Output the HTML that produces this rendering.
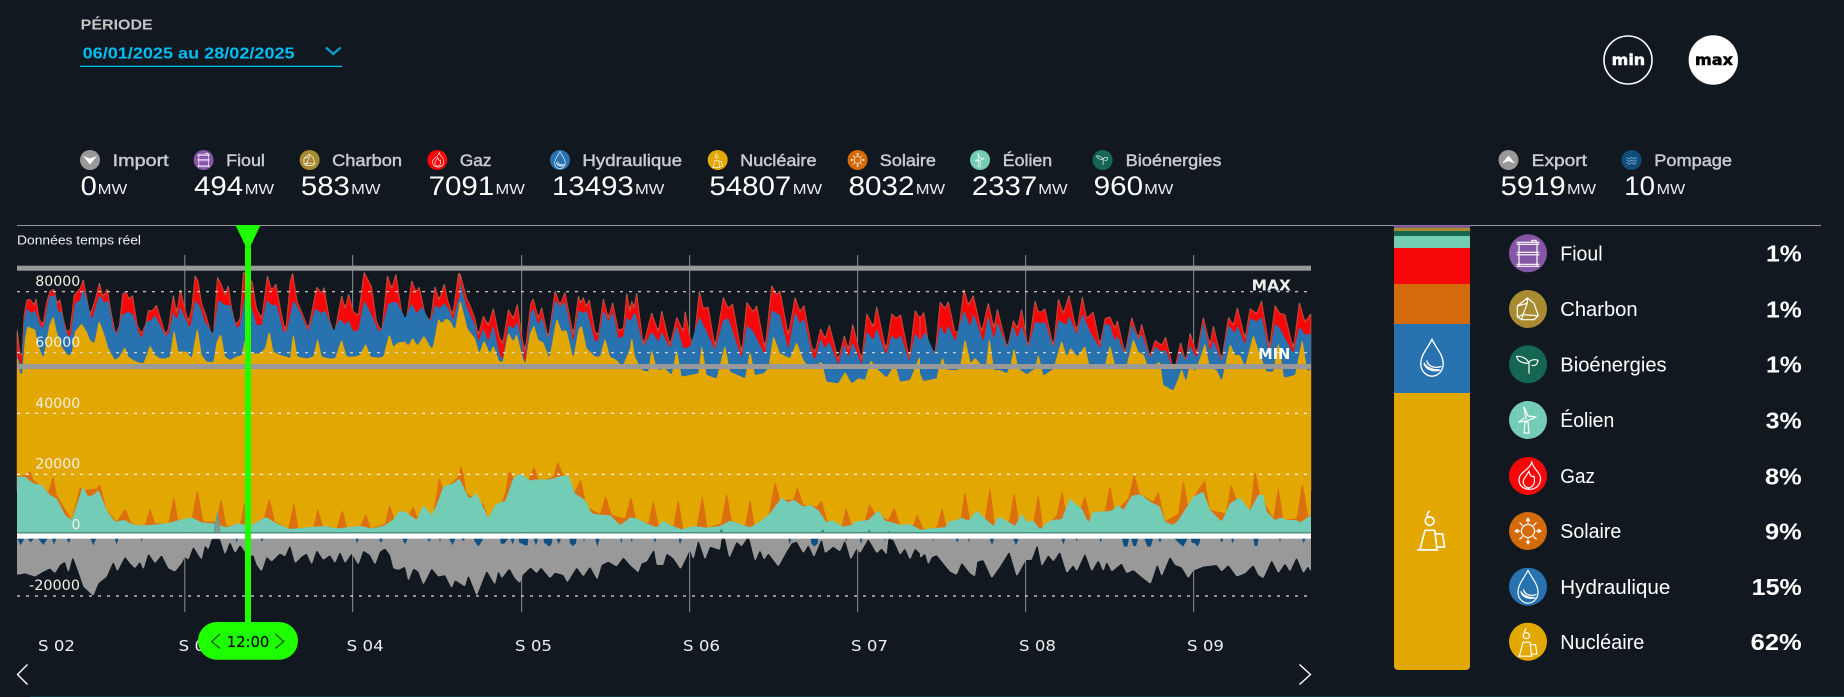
<!DOCTYPE html>
<html lang="fr"><head><meta charset="utf-8"><title>Période</title>
<style>
html,body{margin:0;padding:0;background:#111820;width:1844px;height:697px;overflow:hidden}
svg{display:block}
text{font-family:"Liberation Sans",sans-serif}
.d{font-family:"DejaVu Sans",sans-serif}
.lb{font-size:17px;font-weight:400;fill:#c8ccd0;stroke:#c8ccd0;stroke-width:.45}
.v{font-size:27px;fill:#fff}
.u{font-size:15px;fill:#e8eaec}
.n{font-size:20px;fill:#fff}
.p{font-size:23px;font-weight:700;fill:#fff}
.ax{font-size:14px;fill:#f3f0e6}
.wk{font-size:15px;fill:#eee}
.i{fill:none;stroke:#fff;stroke-width:1.2;stroke-linejoin:round;stroke-linecap:round}
</style></head><body>
<svg width="1844" height="697" viewBox="0 0 1844 697" xmlns="http://www.w3.org/2000/svg">
<defs>
<filter id="sm" filterUnits="userSpaceOnUse" x="0" y="200" width="1844" height="497" color-interpolation-filters="sRGB">
<feGaussianBlur stdDeviation=".7"/>
<feComponentTransfer><feFuncA type="linear" slope="5" intercept="-2"/></feComponentTransfer>
</filter>
<g id="fioul" class="i"><path d="M8 8H30M8 10H30M10 8V31M28 8V31M8 18H30M8 20.500H30M8 30H30M8 32H30M23 8V6H27V8"/></g>
<g id="charbon" class="i"><path d="M18.300 8L25 13.300L29.300 25.700L25 29.700H12.700L8.300 26.700V16L18.300 8ZM8.300 16L18.300 13.300L14 24.700L8.300 26.700M18.300 8V13.300M14 24.700L12.700 29.700M14 24.700L29.300 25.700"/></g>
<g id="bio" class="i"><path d="M20 28V16M20 18C18 13 13 11 7.500 11C8.500 16 13 18 20 18M20 17C22 14 26 14 29 15C28.500 19 26 21 23 20"/></g>
<g id="eolien" class="i"><path d="M15 32L16 21H19L20 32ZM17 18L15 6L19 15L27 16L18 20L10 21L15 17"/></g>
<g id="gaz" class="i"><path d="M22.700 4.700C24 13 34 16 31 25C29.500 30 25 32.500 20 32.300C14 32 9.500 28 10 22C10.500 15 22 12 22.700 4.700ZM20 31C15 30 13 26 15 22C17 19 19 16 20 14C20.500 18 23 21 25 19C26 24 26 29 20 31Z"/></g>
<g id="solaire" class="i"><circle cx="19" cy="19" r="6.500"/><path d="M19 11V7.500M19 27V30.500M11 19H7.500M27 19H30.500M13.300 13.300L10.800 10.800M24.700 13.300L27.200 10.800M13.300 24.700L10.800 27.200M24.700 24.700L27.200 27.200M17.500 8.500L19 6L20.500 8.500M17.500 29.500L19 32L20.500 29.500M8.500 17.500L6 19L8.500 20.500M29.500 17.500L32 19L29.500 20.500"/></g>
<g id="hydro" class="i"><path d="M19 2.500C22 9.500 29 16 29 24.500C29 31 24 35.500 19 35.500C14 35.500 9 31 9 24.500C9 16 16 9.500 19 2.500Z"/><path d="M12 24C13 29 19 32 26 30C21 30 15 29 12 24ZM14.500 22C15.500 26 20 29 27 27"/></g>
<g id="nuc" class="i"><path d="M14 19.500H21M14 19.500L10.500 33M21 19.500L22.500 33M21.500 22H26.500L28 31.500H23M9 33.500H23M17 16C13.500 15 13.500 11 16 10C15 8.500 16 7 17 6M17 16C20 16 21 13 20 11.500C19.500 10 18 10 16 10"/></g>
<g id="pomp" class="i"><path d="M10 14L14 17L19 14L24 17L28 14M10 19L14 22L19 19L24 22L28 19M10 24L14 27L19 24L24 27L28 24" stroke-width="1.800" stroke="#6fa0c4"/></g>
</defs>

<rect width="1844" height="697" fill="#111820"/>
<rect x="30" y="696" width="1814" height="1" fill="#0f3a44"/>

<!-- period -->
<text x="80.700" y="29.500" font-size="15" font-weight="700" fill="#c4c4c4" textLength="72" lengthAdjust="spacingAndGlyphs">PÉRIODE</text>
<text x="82.600" y="58.300" font-size="16" font-weight="700" fill="#00bef2" textLength="212" lengthAdjust="spacingAndGlyphs">06/01/2025 au 28/02/2025</text>
<rect x="80" y="65.700" width="262" height="1.300" fill="#00bef2"/>
<path d="M326 47.500L333.300 54L340.600 47.500" fill="none" stroke="#0b9ccb" stroke-width="2.400"/>

<!-- min/max -->
<circle cx="1628" cy="60" r="24" fill="none" stroke="#fff" stroke-width="1.600"/>
<text class="d" x="1611.700" y="65" font-size="15" font-weight="700" fill="#fff" stroke="#fff" stroke-width=".5" textLength="33.500" lengthAdjust="spacingAndGlyphs">min</text>
<circle cx="1713.300" cy="60" r="24.700" fill="#fff"/>
<text class="d" x="1695" y="65" font-size="15" font-weight="700" fill="#000" stroke="#000" stroke-width=".5" textLength="38" lengthAdjust="spacingAndGlyphs">max</text>

<!-- legend top: icons -->
<circle cx="90" cy="160" r="10" fill="#999"/><path d="M83 156L90 158.500L97 156L90 164.500Z" fill="#fff"/>
<circle cx="203.600" cy="160" r="10" fill="#8556a5"/><g transform="translate(193.600,150) scale(.526)"><use href="#fioul"/></g>
<circle cx="309.600" cy="160" r="10" fill="#a88a30"/><g transform="translate(299.600,150) scale(.526)"><use href="#charbon"/></g>
<circle cx="437.300" cy="160" r="10" fill="#f70707"/><g transform="translate(427.300,150) scale(.526)"><use href="#gaz"/></g>
<circle cx="560" cy="160" r="10" fill="#2872b0"/><g transform="translate(550,150) scale(.526)"><use href="#hydro"/></g>
<circle cx="717.700" cy="160" r="10" fill="#e2a700"/><g transform="translate(707.700,150) scale(.526)"><use href="#nuc"/></g>
<circle cx="857.600" cy="160" r="10" fill="#d46b0b"/><g transform="translate(847.600,150) scale(.526)"><use href="#solaire"/></g>
<circle cx="980" cy="160" r="10" fill="#74ccb5"/><g transform="translate(970,150) scale(.526)"><use href="#eolien"/></g>
<circle cx="1102.600" cy="160" r="10" fill="#166751"/><g transform="translate(1092.600,150) scale(.526)"><use href="#bio"/></g>
<circle cx="1508.500" cy="160" r="10" fill="#999"/><path d="M1502 163.500L1508.500 155.500L1515 163.500L1508.500 161Z" fill="#fff"/>
<circle cx="1631.500" cy="160" r="10" fill="#0f4c7a"/><g transform="translate(1621.500,150) scale(.526)"><use href="#pomp"/></g>

<!-- legend top: labels -->
<text class="lb" x="112.700" y="166" textLength="56" lengthAdjust="spacingAndGlyphs">Import</text>
<text class="lb" x="226.200" y="166" textLength="38.700" lengthAdjust="spacingAndGlyphs">Fioul</text>
<text class="lb" x="332.100" y="166" textLength="70" lengthAdjust="spacingAndGlyphs">Charbon</text>
<text class="lb" x="459.900" y="166" textLength="31.600" lengthAdjust="spacingAndGlyphs">Gaz</text>
<text class="lb" x="582.400" y="166" textLength="99.700" lengthAdjust="spacingAndGlyphs">Hydraulique</text>
<text class="lb" x="740.200" y="166" textLength="76.300" lengthAdjust="spacingAndGlyphs">Nucléaire</text>
<text class="lb" x="879.800" y="166" textLength="56.100" lengthAdjust="spacingAndGlyphs">Solaire</text>
<text class="lb" x="1002.800" y="166" textLength="49.400" lengthAdjust="spacingAndGlyphs">Éolien</text>
<text class="lb" x="1125.700" y="166" textLength="95.700" lengthAdjust="spacingAndGlyphs">Bioénergies</text>
<text class="lb" x="1531.700" y="166" textLength="55.300" lengthAdjust="spacingAndGlyphs">Export</text>
<text class="lb" x="1654.300" y="166" textLength="77.700" lengthAdjust="spacingAndGlyphs">Pompage</text>

<!-- values -->
<text class="v" x="80.700" y="195" textLength="16.200" lengthAdjust="spacingAndGlyphs">0</text><text class="u" x="97.700" y="194" textLength="29.600" lengthAdjust="spacingAndGlyphs">MW</text>
<text class="v" x="194.100" y="195" textLength="49" lengthAdjust="spacingAndGlyphs">494</text><text class="u" x="244.800" y="194" textLength="29.300" lengthAdjust="spacingAndGlyphs">MW</text>
<text class="v" x="300.900" y="195" textLength="49" lengthAdjust="spacingAndGlyphs">583</text><text class="u" x="351.100" y="194" textLength="29.300" lengthAdjust="spacingAndGlyphs">MW</text>
<text class="v" x="428.600" y="195" textLength="65.700" lengthAdjust="spacingAndGlyphs">7091</text><text class="u" x="495.500" y="194" textLength="29.300" lengthAdjust="spacingAndGlyphs">MW</text>
<text class="v" x="552" y="195" textLength="81.800" lengthAdjust="spacingAndGlyphs">13493</text><text class="u" x="635" y="194" textLength="29.300" lengthAdjust="spacingAndGlyphs">MW</text>
<text class="v" x="709.400" y="195" textLength="81.800" lengthAdjust="spacingAndGlyphs">54807</text><text class="u" x="792.800" y="194" textLength="29.300" lengthAdjust="spacingAndGlyphs">MW</text>
<text class="v" x="848.500" y="195" textLength="66" lengthAdjust="spacingAndGlyphs">8032</text><text class="u" x="915.800" y="194" textLength="29.300" lengthAdjust="spacingAndGlyphs">MW</text>
<text class="v" x="971.900" y="195" textLength="65.300" lengthAdjust="spacingAndGlyphs">2337</text><text class="u" x="1038.300" y="194" textLength="29.300" lengthAdjust="spacingAndGlyphs">MW</text>
<text class="v" x="1093.700" y="195" textLength="49.400" lengthAdjust="spacingAndGlyphs">960</text><text class="u" x="1144.300" y="194" textLength="29" lengthAdjust="spacingAndGlyphs">MW</text>
<text class="v" x="1500.700" y="195" textLength="65" lengthAdjust="spacingAndGlyphs">5919</text><text class="u" x="1567" y="194" textLength="29" lengthAdjust="spacingAndGlyphs">MW</text>
<text class="v" x="1624.300" y="195" textLength="30.700" lengthAdjust="spacingAndGlyphs">10</text><text class="u" x="1656.700" y="194" textLength="28.500" lengthAdjust="spacingAndGlyphs">MW</text>

<!-- hr -->
<rect x="17" y="225" width="1804" height="1" fill="#9a9a9a"/>
<text x="17" y="244.500" font-size="13" fill="#f0f0f0" textLength="124" lengthAdjust="spacingAndGlyphs">Données temps réel</text>

<!-- week lines -->
<g fill="#7a7d80">
<rect x="184.200" y="255" width="1.200" height="357"/><rect x="352" y="255" width="1.200" height="357"/><rect x="521" y="255" width="1.200" height="357"/><rect x="689" y="255" width="1.200" height="357"/><rect x="857" y="255" width="1.200" height="357"/><rect x="1025" y="255" width="1.200" height="357"/><rect x="1193" y="255" width="1.200" height="357"/>
</g>

<!-- red -->
<g filter="url(#sm)" fill="#f70707" stroke="#94806a" stroke-width="2">
<g transform="translate(0,225) scale(.333333)"><polygon points="51,305 60,385 66,390 72,270 80,225 90,222 103,240 108,218 118,280 128,300 140,230 150,198 162,192 172,235 180,222 190,280 200,320 210,315 222,210 240,190 250,162 258,205 270,270 285,225 298,172 310,215 322,190 335,270 348,330 358,300 368,205 378,200 388,222 398,210 412,300 424,325 436,300 445,255 455,258 470,240 485,290 497,330 505,310 520,208 530,265 541,190 552,240 565,290 575,250 585,150 595,170 605,235 618,270 632,320 640,330 652,155 665,180 675,210 685,180 695,250 707,300 720,280 730,140 745,160 757,170 770,250 785,280 802,150 815,195 828,175 845,270 857,320 870,170 878,142 892,230 905,260 925,310 950,185 965,205 972,185 990,290 1003,325 1025,210 1035,250 1046,205 1060,260 1075,270 1092,140 1115,185 1130,290 1145,320 1162,150 1175,190 1188,145 1205,260 1218,290 1235,165 1248,200 1258,185 1280,290 1292,280 1305,182 1317,225 1333,175 1343,225 1358,270 1375,145 1380,145 1380,800 51,800"/></g>
<g transform="translate(460,225) scale(.333333)"><polygon points="0,145 10,180 20,220 30,240 45,280 55,330 70,272 85,300 100,248 118,335 128,355 145,252 160,280 172,235 185,330 195,380 212,235 220,220 235,280 245,245 265,340 285,195 300,240 315,200 340,330 355,210 362,235 370,215 378,245 388,222 405,320 415,330 430,218 445,280 458,230 475,315 490,310 500,200 510,260 515,225 522,250 530,200 550,360 575,262 595,320 605,255 630,360 650,275 670,320 675,255 690,335 700,365 718,195 730,250 745,245 765,365 790,215 805,250 818,235 845,385 860,230 880,260 890,240 915,370 935,180 950,210 960,195 985,330 1005,215 1020,260 1032,240 1055,365 1065,380 1082,310 1095,340 1108,298 1135,405 1153,330 1165,375 1178,295 1205,405 1220,265 1240,305 1250,242 1278,375 1295,265 1308,280 1322,268 1348,400 1365,255 1380,280 1380,800 0,800"/></g>
<g transform="translate(920,225) scale(.333333)"><polygon points="0,280 12,260 25,350 45,388 60,230 75,250 85,228 105,320 115,320 132,190 145,240 160,210 185,320 205,232 222,310 232,250 262,370 280,285 292,310 305,250 325,370 345,225 355,260 365,260 375,250 400,365 415,220 430,265 447,210 470,320 487,212 500,280 520,260 540,360 555,280 570,275 585,310 592,285 615,385 635,275 655,340 665,295 690,395 705,345 725,360 737,335 762,440 782,350 797,410 810,322 830,385 850,275 870,360 880,300 905,405 925,275 940,300 952,245 975,340 990,250 1010,265 1025,225 1048,370 1065,240 1080,265 1095,268 1120,370 1138,230 1155,290 1173,265 1173,800 0,800"/></g>
</g>
<!-- blue -->
<g filter="url(#sm)" fill="#2872b0">
<g transform="translate(0,225) scale(.333333)"><polygon points="51,385 60,415 66,415 72,290 80,250 95,265 105,255 120,300 130,310 148,215 165,210 175,260 185,260 195,310 205,335 212,330 225,235 240,225 250,190 262,230 275,285 298,210 315,235 325,225 340,310 352,330 365,270 385,260 400,270 415,320 425,340 440,290 455,285 465,270 480,300 495,330 505,330 520,260 530,285 541,245 555,280 570,310 585,225 600,245 615,290 640,330 655,225 675,240 690,240 710,310 720,300 735,210 750,230 770,300 785,300 800,225 815,240 830,240 850,320 860,320 880,225 900,260 925,320 945,250 965,265 975,255 1000,320 1020,280 1035,300 1045,285 1060,320 1075,315 1092,225 1115,270 1135,318 1145,315 1165,235 1190,230 1215,280 1235,235 1250,265 1265,245 1285,280 1292,290 1305,240 1318,250 1333,235 1345,250 1360,285 1375,220 1380,220 1380,800 51,800"/></g>
<g transform="translate(460,225) scale(.333333)"><polygon points="0,165 10,210 20,245 45,300 55,350 70,310 85,350 100,300 118,385 128,405 145,300 160,310 172,290 185,350 195,420 212,265 220,250 235,300 245,275 265,345 285,225 300,245 315,230 340,350 355,255 370,265 380,255 405,350 415,345 430,255 445,290 458,260 475,340 490,335 500,275 510,290 525,260 550,365 575,320 595,350 605,320 630,370 650,300 670,370 690,365 718,275 740,320 765,375 790,285 805,280 845,400 860,300 880,320 915,390 935,255 960,270 985,375 1005,260 1020,295 1032,280 1055,385 1065,405 1082,340 1095,370 1108,350 1135,420 1153,355 1165,400 1178,350 1205,420 1220,320 1240,345 1250,310 1278,390 1295,330 1308,345 1322,330 1348,410 1365,325 1380,345 1380,800 0,800"/></g>
<g transform="translate(920,225) scale(.333333)"><polygon points="0,350 15,320 45,390 60,300 75,330 85,300 105,350 132,255 150,305 160,265 190,350 205,270 222,345 232,290 262,370 280,300 292,340 305,300 325,370 345,290 365,295 375,290 400,370 415,285 440,300 447,270 470,330 487,265 510,320 540,370 555,295 570,300 585,350 592,330 615,390 635,295 655,345 665,325 690,400 705,365 725,380 737,375 762,440 782,375 797,410 810,360 830,400 850,290 870,380 880,345 905,410 925,300 945,325 952,300 975,360 990,280 1010,290 1025,275 1048,385 1065,295 1080,310 1095,340 1120,385 1138,305 1155,330 1173,325 1173,800 0,800"/></g>
</g>
<!-- gold -->
<g filter="url(#sm)" fill="#e2a700">
<g transform="translate(0,225) scale(.333333)"><polygon points="51,378 60,445 66,448 75,340 82,303 95,310 105,312 115,360 130,400 148,300 160,272 170,320 185,365 205,392 215,385 225,320 245,295 260,320 270,345 283,355 297,285 310,320 325,370 345,405 358,395 375,365 385,395 400,405 415,412 430,415 440,390 450,360 465,390 480,400 497,400 510,395 522,310 535,380 560,380 575,400 592,305 605,390 620,410 640,412 650,350 663,325 675,395 690,405 710,395 725,390 738,330 755,385 780,385 795,370 808,315 820,380 840,390 860,395 870,400 880,320 892,395 920,400 940,395 953,337 965,395 985,400 1005,400 1025,342 1040,395 1065,395 1080,390 1097,355 1112,395 1135,398 1150,395 1168,325 1180,365 1195,352 1215,350 1225,362 1238,338 1252,362 1272,332 1295,372 1300,360 1315,280 1325,295 1338,280 1352,290 1365,315 1380,225 1380,924 51,924"/></g>
<g transform="translate(460,225) scale(.333333)"><polygon points="0,222 10,260 22,310 45,340 58,385 72,345 90,385 100,360 118,410 128,410 145,322 160,350 170,325 185,385 195,420 210,325 222,300 235,345 250,352 268,400 290,278 305,318 320,316 340,400 355,315 365,300 380,370 405,395 420,395 435,338 450,395 470,405 480,418 490,418 510,370 515,330 525,395 545,435 565,440 575,370 590,430 600,435 615,430 635,450 650,370 665,455 715,445 725,355 740,450 770,460 795,358 810,440 855,460 870,375 885,450 910,445 925,430 940,330 960,385 990,400 1010,350 1030,405 1050,432 1085,410 1100,470 1135,475 1155,440 1175,475 1195,460 1215,465 1232,405 1250,430 1280,458 1305,415 1320,470 1350,465 1380,390 1380,924 0,924"/></g>
<g transform="translate(920,225) scale(.333333)"><polygon points="0,445 10,468 50,460 55,435 68,395 75,420 85,435 115,435 122,415 135,338 152,415 165,398 180,415 197,430 208,333 222,435 240,435 260,445 272,420 282,365 295,430 320,448 345,430 355,385 370,452 400,432 425,345 440,395 452,368 472,395 495,362 510,430 555,420 570,358 585,420 600,432 620,420 640,340 655,380 672,390 685,430 700,420 720,410 730,480 760,497 775,460 785,430 798,470 810,415 825,440 840,400 855,352 870,430 890,435 905,468 930,355 945,390 960,390 975,425 1000,328 1020,390 1040,440 1060,440 1075,348 1092,458 1125,450 1147,340 1162,440 1173,430 1173,924 0,924"/></g>
</g>
<!-- orange -->
<g filter="url(#sm)" fill="#dc700e">
<g transform="translate(0,440) scale(.333333)"><polygon points="51,108 80,105 90,90 100,120 145,155 160,105 170,165 215,238 240,140 250,150 290,145 300,132 320,210 350,245 375,205 395,250 415,255 435,255 450,203 465,250 505,250 522,165 535,245 575,235 592,145 610,245 650,245 663,172 680,260 720,250 735,180 750,262 790,240 808,172 825,245 865,265 882,185 895,265 940,265 953,203 970,262 1010,265 1027,207 1042,265 1080,260 1098,220 1112,265 1155,252 1168,192 1185,240 1225,225 1240,198 1255,240 1300,220 1318,108 1330,150 1375,110 1380,90 1380,279 51,279"/></g>
<g transform="translate(460,450) scale(.333333)"><polygon points="0,40 10,70 20,130 60,155 70,160 85,205 125,155 135,130 148,58 160,85 205,90 222,48 238,95 280,80 293,33 310,75 345,125 362,85 380,170 420,192 437,135 455,195 495,205 513,135 527,205 565,220 580,148 597,232 640,230 655,143 670,238 710,230 727,132 742,233 783,220 800,125 815,212 855,228 870,143 885,230 925,200 945,92 960,150 1000,148 1012,110 1030,165 1070,170 1085,150 1102,215 1145,228 1158,170 1175,225 1215,210 1228,160 1245,190 1285,210 1303,170 1320,225 1360,225 1372,190 1380,215 1380,249 0,249"/></g>
<g transform="translate(920,450) scale(.333333)"><polygon points="0,210 10,238 50,232 66,170 80,232 122,205 135,120 150,210 195,205 210,107 225,228 268,212 283,122 298,225 340,215 355,128 370,238 410,195 427,117 440,205 480,180 495,135 515,218 555,182 570,102 585,185 625,145 642,70 660,132 700,155 715,122 735,215 775,190 790,85 805,170 840,110 855,90 870,180 918,190 933,100 950,150 990,180 1005,58 1020,135 1060,205 1075,107 1090,210 1130,205 1147,95 1165,200 1173,190 1173,249 0,249"/></g>
</g>
<!-- teal -->
<g filter="url(#sm)" fill="#72ccb6">
<g transform="translate(0,440) scale(.333333)"><polygon points="51,110 75,110 100,130 125,135 150,165 170,175 195,225 215,240 232,190 248,140 265,170 280,165 295,150 310,185 322,215 345,245 375,240 395,252 420,256 450,255 500,250 520,245 545,238 575,232 605,247 640,250 680,262 715,250 750,258 790,235 800,232 830,250 870,267 920,262 975,258 1010,265 1080,258 1115,265 1150,258 1178,240 1200,212 1220,218 1250,240 1270,195 1295,225 1310,195 1330,140 1360,130 1380,115 1380,279 51,279"/></g>
<g transform="translate(460,450) scale(.333333)"><polygon points="0,90 10,110 25,142 35,143 48,128 60,150 85,205 105,165 125,155 135,155 160,85 175,73 190,75 210,92 230,88 270,88 295,80 325,75 345,130 375,150 395,190 430,195 450,195 480,225 495,215 510,202 530,205 560,220 590,232 610,212 630,225 665,238 700,228 740,233 780,228 810,212 835,220 870,232 900,215 930,190 965,142 985,158 1000,148 1030,170 1050,165 1075,180 1100,218 1115,210 1150,230 1175,225 1185,215 1225,210 1255,182 1275,212 1300,218 1320,225 1350,222 1380,238 1380,249 0,249"/></g>
<g transform="translate(920,450) scale(.333333)"><polygon points="0,240 30,235 75,232 90,212 105,212 125,203 145,212 170,182 195,205 220,228 235,200 260,212 285,228 305,190 320,215 340,212 360,238 385,215 405,208 425,208 450,145 470,165 485,175 505,218 520,185 550,185 575,182 595,165 610,180 635,138 660,132 690,155 720,170 735,215 760,225 775,210 800,172 820,140 850,125 870,180 905,215 930,160 960,142 990,182 1015,133 1030,135 1040,185 1065,210 1085,202 1100,210 1130,210 1140,218 1173,195 1173,249 0,249"/></g>
</g>
<!-- teal spikes -->
<g transform="translate(0,440) scale(.333333)"><polygon fill="#5f9f90" points="640,279 652,212 662,279"/><polygon fill="#8a9a98" points="645,279 652,240 659,279"/></g>
<g transform="translate(460,450) scale(.333333)" fill="#2c8a75"><polygon points="778,249 784,235 790,249"/><polygon points="1080,249 1088,238 1096,249"/><polygon points="1222,249 1228,238 1234,249"/><polygon points="1283,249 1288,242 1294,249"/></g>
<!-- gray -->
<g filter="url(#sm)" fill="#999">
<g transform="translate(0,440) scale(.333333)"><polygon points="51,295 51,405 75,400 90,405 105,410 130,395 150,385 165,400 180,375 195,365 205,400 218,350 235,395 250,440 280,468 295,430 320,410 340,365 352,395 375,350 390,370 405,385 420,365 430,390 445,340 465,370 485,345 505,385 525,395 545,370 555,350 565,360 580,320 595,345 605,360 615,315 625,330 635,298 660,298 675,345 690,305 705,340 720,315 745,350 760,345 770,375 785,395 800,350 815,365 840,340 855,350 870,315 885,370 905,350 920,340 935,375 950,330 970,360 990,345 1005,370 1020,335 1035,370 1055,340 1075,375 1090,332 1110,345 1125,375 1140,335 1155,325 1170,345 1180,385 1195,390 1215,380 1225,425 1240,385 1255,395 1270,435 1295,385 1315,410 1335,405 1355,445 1365,420 1380,430 1380,295"/></g>
<g transform="translate(460,450) scale(.333333)"><polygon points="0,265 0,400 15,410 25,375 35,400 50,438 80,362 105,405 115,362 125,385 148,355 165,385 180,400 188,375 212,352 230,370 243,352 270,385 285,368 310,375 322,398 350,352 370,380 390,350 412,390 425,345 445,335 470,350 490,322 510,345 535,368 545,340 560,335 582,298 590,345 610,345 620,310 640,325 662,358 690,300 700,330 715,270 735,330 750,290 780,300 785,267 795,267 808,325 830,275 845,290 860,267 868,267 885,335 900,300 912,330 925,310 955,350 980,305 995,280 1010,275 1030,310 1045,285 1062,322 1085,267 1095,310 1120,290 1140,305 1155,270 1172,330 1190,295 1200,310 1225,267 1250,310 1265,295 1280,315 1285,267 1300,270 1320,315 1335,295 1350,330 1365,295 1380,310 1380,265"/></g>
<g transform="translate(920,450) scale(.333333)"><polygon points="0,265 0,325 15,310 25,345 35,322 50,315 70,340 90,365 110,375 125,338 150,370 165,380 172,335 190,330 215,385 240,350 268,305 290,380 318,330 335,330 352,283 365,350 385,315 400,335 420,305 440,370 460,345 470,365 495,310 515,365 535,330 550,365 560,335 575,365 605,340 620,370 640,360 670,385 692,402 712,342 725,380 750,320 765,345 785,352 805,385 820,362 850,350 890,345 905,365 925,345 950,380 975,370 1000,345 1015,375 1030,385 1055,330 1075,370 1095,340 1110,365 1130,322 1150,370 1165,348 1173,370 1173,265"/></g>
</g>
<!-- blue blobs -->
<g fill="#0f4f80">
<g transform="translate(0,440) scale(.333333)"><polygon points="51,292 75,292 62,316"/><polygon points="80,292 105,292 92,307"/><polygon points="112,292 145,292 130,315"/><polygon points="155,292 170,292 162,314"/><polygon points="198,292 215,292 206,309"/><polygon points="270,292 290,292 280,316"/><polygon points="343,292 357,292 350,313"/><polygon points="420,292 430,292 425,303"/><polygon points="705,292 715,292 710,307"/><polygon points="780,292 792,292 786,305"/><polygon points="1065,292 1078,292 1071,310"/><polygon points="1135,292 1150,292 1143,309"/><polygon points="1205,292 1225,292 1215,313"/><polygon points="1280,292 1295,292 1287,306"/><polygon points="1315,292 1325,292 1320,304"/><polygon points="1345,292 1368,292 1358,315"/></g>
<g transform="translate(460,450) scale(.333333)"><polygon points="0,262 18,262 10,273"/><polygon points="42,262 68,262 68,270 55,290 42,270"/><polygon points="120,262 148,262 132,282 122,280"/><polygon points="150,262 165,262 158,283"/><polygon points="175,262 205,262 203,285 198,287 178,278"/><polygon points="220,262 235,262 228,287"/><polygon points="250,262 278,262 275,282 268,290 252,278"/><polygon points="288,262 305,262 296,282"/><polygon points="328,262 350,262 348,280 338,288 330,280"/><polygon points="368,262 376,262 372,274"/><polygon points="405,262 420,262 412,290"/><polygon points="480,262 488,262 484,281"/><polygon points="510,262 520,262 515,275"/><polygon points="580,262 590,262 585,279"/><polygon points="655,262 667,262 660,283"/><polygon points="985,262 995,262 988,283"/><polygon points="1052,262 1075,262 1073,280 1063,290 1054,280"/><polygon points="1155,262 1163,262 1159,274"/><polygon points="1198,262 1208,262 1203,282"/><polygon points="1272,262 1278,262 1275,274"/></g>
<g transform="translate(920,450) scale(.333333)"><polygon points="36,262 43,262 40,273"/><polygon points="105,262 118,262 112,278"/><polygon points="143,262 150,262 147,277"/><polygon points="208,262 224,262 216,285"/><polygon points="278,262 297,262 288,286"/><polygon points="423,262 437,262 430,283"/><polygon points="465,262 475,262 470,274"/><polygon points="537,262 548,262 542,276"/><polygon points="605,262 628,262 622,290 612,290"/><polygon points="632,262 656,262 648,288 640,288"/><polygon points="672,262 700,262 692,290 682,290"/><polygon points="712,262 727,262 720,277"/><polygon points="760,262 805,262 795,280 790,290 775,278"/><polygon points="812,262 842,262 838,280 832,290 825,280 815,278"/><polygon points="898,262 912,262 905,278"/><polygon points="932,262 944,262 938,280"/><polygon points="1000,262 1016,262 1012,288 1004,288"/><polygon points="1075,262 1085,262 1080,274"/><polygon points="1145,262 1158,262 1151,279"/></g>
</g>

<!-- zero / limits -->
<rect x="17" y="532" width="1294" height="1" fill="#3d9b85"/>
<rect x="17" y="533.300" width="1294" height="5.400" fill="#fff"/>
<rect x="17" y="265.700" width="1294" height="5" fill="#999"/>
<rect x="17" y="364" width="1294" height="5" fill="#999"/>

<!-- dotted -->
<g stroke-dasharray="3 6" stroke-width="1.200" fill="none">
<path d="M17 291.700H1311M17 352.700H1311" stroke="#dcdcdc"/>
<path d="M17 413.300H1311M17 474.300H1311" stroke="#fff"/>
<path d="M17 596H1311" stroke="#dcdcdc"/>
</g>

<!-- axis labels -->
<text class="ax d" x="35.300" y="286" textLength="45" lengthAdjust="spacingAndGlyphs">80000</text>
<text class="ax d" x="35.300" y="347" textLength="45" lengthAdjust="spacingAndGlyphs">60000</text>
<text class="ax d" x="35.300" y="408" textLength="45" lengthAdjust="spacingAndGlyphs">40000</text>
<text class="ax d" x="35.300" y="468.500" textLength="45" lengthAdjust="spacingAndGlyphs">20000</text>
<text class="ax d" x="71.500" y="529.500" textLength="9" lengthAdjust="spacingAndGlyphs">0</text>
<text class="ax d" x="29" y="590" textLength="51" lengthAdjust="spacingAndGlyphs">-20000</text>
<text class="d" x="1251.700" y="290.700" font-size="15" font-weight="700" fill="#eee" textLength="39.300" lengthAdjust="spacingAndGlyphs">MAX</text>
<text class="d" x="1258.300" y="359" font-size="15" font-weight="700" fill="#fff" textLength="32" lengthAdjust="spacingAndGlyphs">MIN</text>

<!-- weeks -->
<text class="wk d" x="38" y="651" textLength="37" lengthAdjust="spacingAndGlyphs">S 02</text>
<text class="wk d" x="178.700" y="651" textLength="37" lengthAdjust="spacingAndGlyphs">S 03</text>
<text class="wk d" x="346.700" y="651" textLength="37" lengthAdjust="spacingAndGlyphs">S 04</text>
<text class="wk d" x="515" y="651" textLength="37" lengthAdjust="spacingAndGlyphs">S 05</text>
<text class="wk d" x="683" y="651" textLength="37" lengthAdjust="spacingAndGlyphs">S 06</text>
<text class="wk d" x="851" y="651" textLength="37" lengthAdjust="spacingAndGlyphs">S 07</text>
<text class="wk d" x="1019" y="651" textLength="37" lengthAdjust="spacingAndGlyphs">S 08</text>
<text class="wk d" x="1187" y="651" textLength="37" lengthAdjust="spacingAndGlyphs">S 09</text>

<!-- nav arrows -->
<path d="M27.500 664.500L17.500 674.500L27.500 684.500" fill="none" stroke="#fff" stroke-width="1.400"/>
<path d="M1299.500 664.500L1310.500 674.500L1299.500 684.500" fill="none" stroke="#fff" stroke-width="1.400"/>

<!-- cursor -->
<polygon points="235.500,225 260.500,225 251,245 251,630 245,630 245,245" fill="#1eff00"/>
<rect x="198" y="622" width="100" height="37.700" rx="18.800" fill="#1eff00"/>
<text class="d" x="226.700" y="647" font-size="15" fill="#0a0a0a" stroke="#0a0a0a" stroke-width=".2" textLength="42.600" lengthAdjust="spacingAndGlyphs">12:00</text>
<path d="M220 634L211.700 641.500L220 648.500M275.300 634L283.700 641.500L275.300 648.500" fill="none" stroke="#14600a" stroke-width="1.300"/>

<!-- stacked bar -->
<rect x="1394" y="225.300" width="76" height="2.400" fill="#8556a5"/>
<rect x="1394" y="227.700" width="76" height="3.300" fill="#a88a30"/>
<rect x="1394" y="231" width="76" height="5" fill="#166751"/>
<rect x="1394" y="236" width="76" height="12" fill="#74ccb5"/>
<rect x="1394" y="248" width="76" height="36" fill="#f70707"/>
<rect x="1394" y="284" width="76" height="40" fill="#d46b0b"/>
<rect x="1394" y="324" width="76" height="69" fill="#2872b0"/>
<path d="M1394 393H1470V666a4 4 0 0 1-4 4H1398a4 4 0 0 1-4-4Z" fill="#e2a700"/>
<g transform="translate(1410.700,336.400) scale(1.120)"><use href="#hydro"/></g>
<g transform="translate(1405.400,503) scale(1.400)"><use href="#nuc"/></g>

<!-- right legend -->
<circle cx="1528" cy="253.300" r="19" fill="#8556a5"/><g transform="translate(1509,234.300)"><use href="#fioul"/></g>
<circle cx="1528" cy="309" r="19" fill="#a88a30"/><g transform="translate(1509,290)"><use href="#charbon"/></g>
<circle cx="1528" cy="364.300" r="19" fill="#166751"/><g transform="translate(1509,345.300)"><use href="#bio"/></g>
<circle cx="1528" cy="420" r="19" fill="#74ccb5"/><g transform="translate(1509,401)"><use href="#eolien"/></g>
<circle cx="1528" cy="476" r="19" fill="#f70707"/><g transform="translate(1509,457)"><use href="#gaz"/></g>
<circle cx="1528" cy="531" r="19" fill="#d46b0b"/><g transform="translate(1509,512)"><use href="#solaire"/></g>
<circle cx="1528" cy="586.700" r="19" fill="#2872b0"/><g transform="translate(1509,567.700)"><use href="#hydro"/></g>
<circle cx="1528" cy="641.700" r="19" fill="#e2a700"/><g transform="translate(1509,622.700)"><use href="#nuc"/></g>

<text class="n" x="1560.300" y="260.700" textLength="42.300" lengthAdjust="spacingAndGlyphs">Fioul</text>
<text class="n" x="1560.300" y="316" textLength="77.300" lengthAdjust="spacingAndGlyphs">Charbon</text>
<text class="n" x="1560.300" y="371.500" textLength="106.300" lengthAdjust="spacingAndGlyphs">Bioénergies</text>
<text class="n" x="1560.300" y="427" textLength="54" lengthAdjust="spacingAndGlyphs">Éolien</text>
<text class="n" x="1560.300" y="483" textLength="34.700" lengthAdjust="spacingAndGlyphs">Gaz</text>
<text class="n" x="1560.300" y="538" textLength="61" lengthAdjust="spacingAndGlyphs">Solaire</text>
<text class="n" x="1560.300" y="594" textLength="110" lengthAdjust="spacingAndGlyphs">Hydraulique</text>
<text class="n" x="1560.300" y="649" textLength="84" lengthAdjust="spacingAndGlyphs">Nucléaire</text>

<text class="p" x="1766" y="261.700" textLength="35.700" lengthAdjust="spacingAndGlyphs">1%</text>
<text class="p" x="1766" y="317.300" textLength="35.700" lengthAdjust="spacingAndGlyphs">1%</text>
<text class="p" x="1766" y="372.700" textLength="35.700" lengthAdjust="spacingAndGlyphs">1%</text>
<text class="p" x="1765.700" y="428.300" textLength="36" lengthAdjust="spacingAndGlyphs">3%</text>
<text class="p" x="1765" y="484.300" textLength="36.700" lengthAdjust="spacingAndGlyphs">8%</text>
<text class="p" x="1765" y="539.300" textLength="36.700" lengthAdjust="spacingAndGlyphs">9%</text>
<text class="p" x="1751.700" y="595" textLength="50" lengthAdjust="spacingAndGlyphs">15%</text>
<text class="p" x="1750.700" y="650" textLength="51" lengthAdjust="spacingAndGlyphs">62%</text>
</svg>
</body></html>
